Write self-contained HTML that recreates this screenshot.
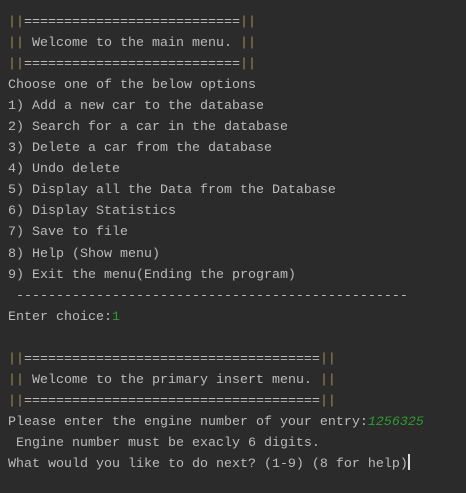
<!DOCTYPE html>
<html><head><style>
body{margin:0;background:#2b2b2b;width:466px;height:493px;overflow:hidden}
pre{margin:0;position:absolute;left:8px;top:12px;font-family:"Liberation Mono",monospace;font-size:13.33px;line-height:21.05px;color:#bbbbbb}
.p{color:#a3865a}
.g{color:#2f9a2f}
.i{color:#2f9a2f;font-style:italic}
.c{display:inline-block;width:2px;height:16px;background:#ddd;vertical-align:-3px}
</style></head><body>
<pre><span class="p">||</span>===========================<span class="p">||</span>
<span class="p">||</span> Welcome to the main menu. <span class="p">||</span>
<span class="p">||</span>===========================<span class="p">||</span>
Choose one of the below options
1) Add a new car to the database
2) Search for a car in the database
3) Delete a car from the database
4) Undo delete
5) Display all the Data from the Database
6) Display Statistics
7) Save to file
8) Help (Show menu)
9) Exit the menu(Ending the program)
 -------------------------------------------------
Enter choice:<span class="g">1</span>

<span class="p">||</span>=====================================<span class="p">||</span>
<span class="p">||</span> Welcome to the primary insert menu. <span class="p">||</span>
<span class="p">||</span>=====================================<span class="p">||</span>
Please enter the engine number of your entry:<span class="i">1256325</span>
 Engine number must be exacly 6 digits.
What would you like to do next? (1-9) (8 for help)<span class="c"></span></pre>
</body></html>
